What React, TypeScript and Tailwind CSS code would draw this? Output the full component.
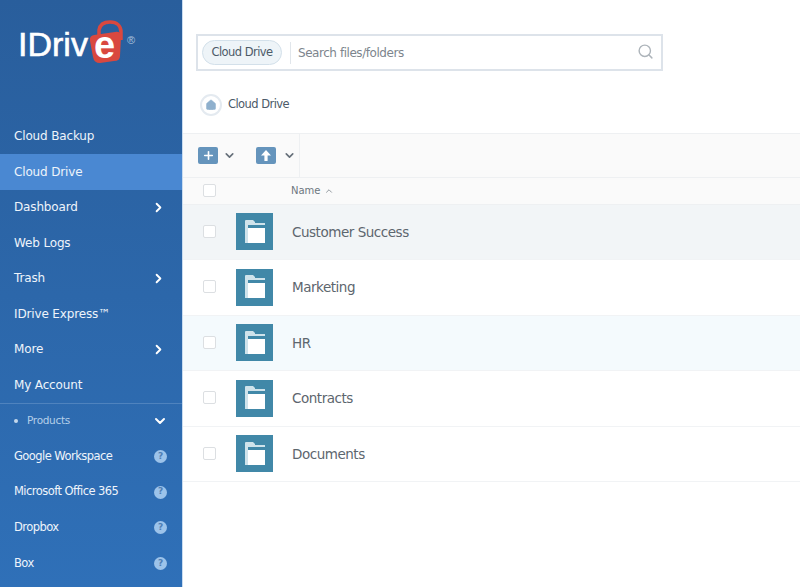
import { ChevronDown, ChevronRight, ChevronUp, Plus, Search, Home } from "lucide-react";

const font = "font-['DejaVu_Sans','Liberation_Sans',sans-serif]";

const mainNav = [
    { label: "Cloud Backup" },
    { label: "Cloud Drive", active: true },
    { label: "Dashboard", arrow: true },
    { label: "Web Logs" },
    { label: "Trash", arrow: true },
    { label: "IDrive Express™" },
    { label: "More", arrow: true },
    { label: "My Account" },
];

const products = ["Google Workspace", "Microsoft Office 365", "Dropbox", "Box"];

const folders = [
    { name: "Customer Success", bg: "bg-[#f2f5f7]" },
    { name: "Marketing", bg: "bg-white" },
    { name: "HR", bg: "bg-[#f4fafd]" },
    { name: "Contracts", bg: "bg-white" },
    { name: "Documents", bg: "bg-white" },
];

function Logo() {
    return (
        <div className="flex h-[100px] items-start pl-[18px] pt-[24px]">
            <span className="font-['Liberation_Sans',sans-serif] text-[34px] leading-[40px] text-white [-webkit-text-stroke:0.6px_white]">IDriv</span>
            <div className="relative ml-px mt-[-4px] h-[44px] w-[36px]">
                <svg viewBox="0 0 36 44" className="h-[44px] w-[36px]">
                    <path d="M10 15 V10 C11 4 16 2 21 2 C28 2 32 6 32 12 V20" fill="none" stroke="#d9483f" strokeWidth="3.5" />
                    <path d="M5 15 L26 12 Q32 11 32 17 L31 36 Q31 41 25 41 L11 43 Q5 43 4 37 L1 21 Q0 16 5 15 Z" fill="#d9483f" />
                </svg>
                <span className="absolute left-[5px] top-[3px] font-['Liberation_Sans',sans-serif] text-[38px] font-bold leading-[44px] text-white">e</span>
            </div>
            <span className="ml-[2px] mt-[10px] font-['Liberation_Sans',sans-serif] text-[11px] leading-[12px] text-[#a9c2dd]">®</span>
        </div>
    );
}

function Sidebar() {
    return (
        <aside className="flex h-[587px] w-[183px] shrink-0 flex-col overflow-hidden border-r border-[#c9dcf0] bg-gradient-to-b from-[#295e9c] to-[#2f70b8]">
            <Logo />
            <nav className="mt-[18.5px]">
                {mainNav.map((item) => (
                    <div
                        key={item.label}
                        className={`flex h-[35.5px] items-center justify-between pl-[14px] pr-[16px] text-[12px] tracking-[-0.15px] text-[#eef4fb] ${item.active ? "bg-[#4a88d2]" : ""}`}
                    >
                        <span>{item.label}</span>
                        {item.arrow && <ChevronRight size={15} strokeWidth={3} className="text-white" />}
                    </div>
                ))}
            </nav>
            <div className="flex h-[36px] items-center justify-between border-t border-[#4f83be] pl-[14px] pr-[14px]">
                <div className="flex items-center gap-[9px] text-[10.5px] tracking-[-0.3px] text-[#b5cfe9]">
                    <span className="h-[4px] w-[4px] rounded-full bg-[#c4d8ec]" />
                    Products
                </div>
                <ChevronDown size={16} strokeWidth={3} className="text-white" />
            </div>
            {products.map((name) => (
                <div key={name} className="flex h-[35.7px] items-center justify-between pl-[14px] pr-[15px] text-[11.5px] tracking-[-0.55px] text-[#eef4fb]">
                    <span>{name}</span>
                    <span className="flex h-[13px] w-[13px] items-center justify-center rounded-full bg-[#9cc3ea] text-[9px] font-bold tracking-normal text-[#4f7fb4]">?</span>
                </div>
            ))}
        </aside>
    );
}

function SearchBar() {
    return (
        <div className="ml-[13px] mt-[34px] flex h-[37px] w-[467px] items-center border-2 border-[#dde3ea] pl-[4px] pr-[7px]">
            <div className="flex h-[25px] w-[80px] items-center justify-center rounded-full border border-[#d3e0ea] bg-[#eef4f8] text-[11.5px] tracking-[-0.55px] text-[#4c5a68]">
                Cloud Drive
            </div>
            <div className="ml-[8px] h-[22px] w-px bg-[#e1e6eb]" />
            <span className="ml-[7px] flex-1 text-[12px] tracking-[-0.45px] text-[#7d858d]">Search files/folders</span>
            <Search size={17} strokeWidth={2} className="mt-[-3px] text-[#adb4ba]" />
        </div>
    );
}

function Breadcrumb() {
    return (
        <div className="ml-[17px] mt-[22px] flex h-[24px] items-center gap-[6px]">
            <div className="flex h-[22px] w-[22px] items-center justify-center rounded-full border-2 border-[#e4eaf0]">
                <Home size={12} fill="#8fb0cd" strokeWidth={1} className="text-[#8fb0cd]" />
            </div>
            <span className="text-[11.5px] tracking-[-0.55px] text-[#4c5a68]">Cloud Drive</span>
        </div>
    );
}

function Toolbar() {
    return (
        <div className="mt-[16px] flex h-[45px] border-y border-[#eef0f2] bg-[#fafafa]">
            <div className="flex w-[58px] items-center pl-[15px]">
                <span className="flex h-[17px] w-[20px] items-center justify-center rounded-[2px] bg-[#6594bc]">
                    <Plus size={13} strokeWidth={3} className="text-white" />
                </span>
                <ChevronDown size={13} strokeWidth={3} className="ml-[5px] text-[#66707a]" />
            </div>
            <div className="flex w-[59px] items-center border-r border-[#eef0f2] pl-[15px]">
                <span className="flex h-[17px] w-[20px] items-center justify-center rounded-[2px] bg-[#6594bc]">
                    <svg viewBox="0 0 10 11" className="h-[11px] w-[10px]">
                        <path d="M5 0 L10 5.5 H6.6 V11 H3.4 V5.5 H0 Z" fill="#fff" />
                    </svg>
                </span>
                <ChevronDown size={13} strokeWidth={3} className="ml-[7px] text-[#66707a]" />
            </div>
        </div>
    );
}

function Checkbox() {
    return <span className="mt-[-1px] h-[13px] w-[13px] rounded-[2px] border border-[#dcdfe2] bg-white" />;
}

function FolderIcon() {
    return (
        <div className="flex h-[37px] w-[37px] items-center justify-center bg-[#4188a8]">
            <svg viewBox="0 0 20 24" className="h-[24px] w-[20px]">
                <path d="M0 23 V1 Q0 0 1 0 H8 L10 2 V3 H20 V5 H3 V23 Z" fill="#cfe3eb" />
                <rect x="3" y="8" width="17" height="15" fill="#fff" />
            </svg>
        </div>
    );
}

function FileList() {
    return (
        <div>
            <div className="flex h-[26.5px] items-center border-b border-[#eef0f2] bg-[#fafafa] pl-[20px]">
                <Checkbox />
                <span className="ml-[75px] text-[10px] text-[#6d7780]">Name</span>
                <ChevronUp size={10} strokeWidth={2} className="ml-[3px] text-[#7d858d]" />
            </div>
            {folders.map((f) => (
                <div key={f.name} className={`flex h-[55.5px] items-center border-b border-[#f1f3f5] pl-[20px] ${f.bg}`}>
                    <Checkbox />
                    <div className="ml-[20px]">
                        <FolderIcon />
                    </div>
                    <span className="ml-[19px] text-[13.5px] tracking-[-0.47px] text-[#5d666e]">{f.name}</span>
                </div>
            ))}
        </div>
    );
}

export default function App() {
    return (
        <div className={`flex h-[587px] w-[800px] overflow-hidden bg-white ${font}`}>
            <Sidebar />
            <main className="min-w-0 flex-1">
                <div className="flex flex-col">
                    <SearchBar />
                    <Breadcrumb />
                    <Toolbar />
                    <FileList />
                </div>
            </main>
        </div>
    );
}
